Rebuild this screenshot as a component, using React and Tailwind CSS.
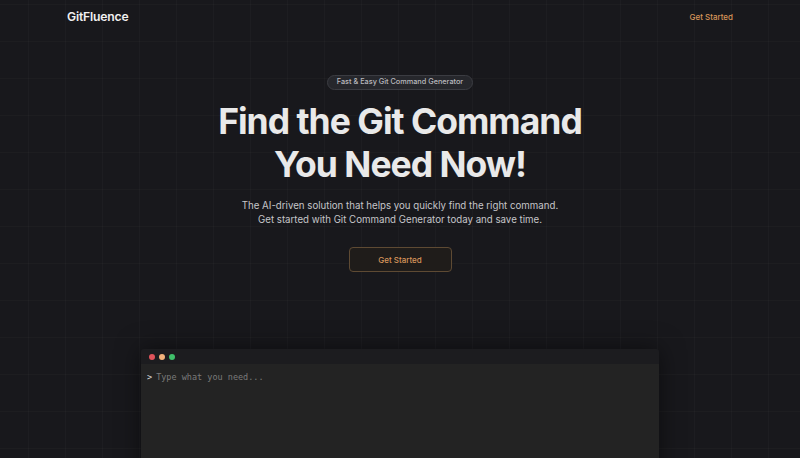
import React from 'react';

const sans = { fontFamily: 'Inter, "Liberation Sans", sans-serif' };

const App = () => {
  return (
    <div
      className="relative h-[458px] w-full overflow-hidden bg-[#18181c] bg-[linear-gradient(to_right,rgba(255,255,255,0.022)_1px,transparent_1px),linear-gradient(to_bottom,rgba(255,255,255,0.018)_1px,transparent_1px)] bg-[size:37px_37px] bg-[position:28px_4px]"
      style={sans}
    >
      {/* nav */}
      <nav className="flex h-[34px] items-center justify-between pl-[67px] pr-[67px]">
        <span className="text-[12.2px] font-semibold tracking-[-0.2px] text-[#f0f0f0]">GitFluence</span>
        <a className="text-[8px] font-medium text-[#d6955a]">Get Started</a>
      </nav>

      {/* hero */}
      <section className="mt-[41px] flex flex-col items-center text-center">
        <span className="flex h-[15px] items-center rounded-full border border-[#3b3c42] bg-[#26272c] px-[9px] text-[7.3px] font-medium text-[#b9b9be]">
          Fast &amp; Easy Git Command Generator
        </span>
        <h1 className="mt-[10px] text-[35.5px] font-bold leading-[43px] tracking-[-1px] text-[#e9e9e9]">
          Find the Git Command
          <br />
          You Need Now!
        </h1>
        <p className="mt-[13px] text-[9.7px] leading-[14px] text-[#c6c6c9]">
          The AI-driven solution that helps you quickly find the right command.
          <br />
          Get started with Git Command Generator today and save time.
        </p>
        <button className="mt-[20px] h-[25px] w-[103px] rounded-[4px] border border-[#5e4a33] bg-[#1f1c1a] text-[8px] font-medium text-[#d6955a]">
          Get Started
        </button>
      </section>

      {/* terminal */}
      <div className="mx-auto mt-[77px] w-[518px] overflow-hidden rounded-t-[3px] shadow-[0_0_24px_rgba(0,0,0,0.5)]">
        <div className="flex h-[15px] items-center gap-[4px] bg-[#1c1c1f] pl-[8px]">
          <span className="h-[6px] w-[6px] rounded-full bg-[#e0535b]" />
          <span className="h-[6px] w-[6px] rounded-full bg-[#f2b27c]" />
          <span className="h-[6px] w-[6px] rounded-full bg-[#3fbf6a]" />
        </div>
        <div className="h-[120px] bg-[#232323] px-[6px] pt-[7px] text-[8.5px] leading-[12px]" style={{ fontFamily: '"DejaVu Sans Mono", "Liberation Mono", monospace' }}>
          <span className="text-[#d8d8d8]">&gt;</span>
          <span className="ml-[4px] text-[#7a7a7a]">Type what you need...</span>
        </div>
      </div>
    </div>
  );
};

export default App;
